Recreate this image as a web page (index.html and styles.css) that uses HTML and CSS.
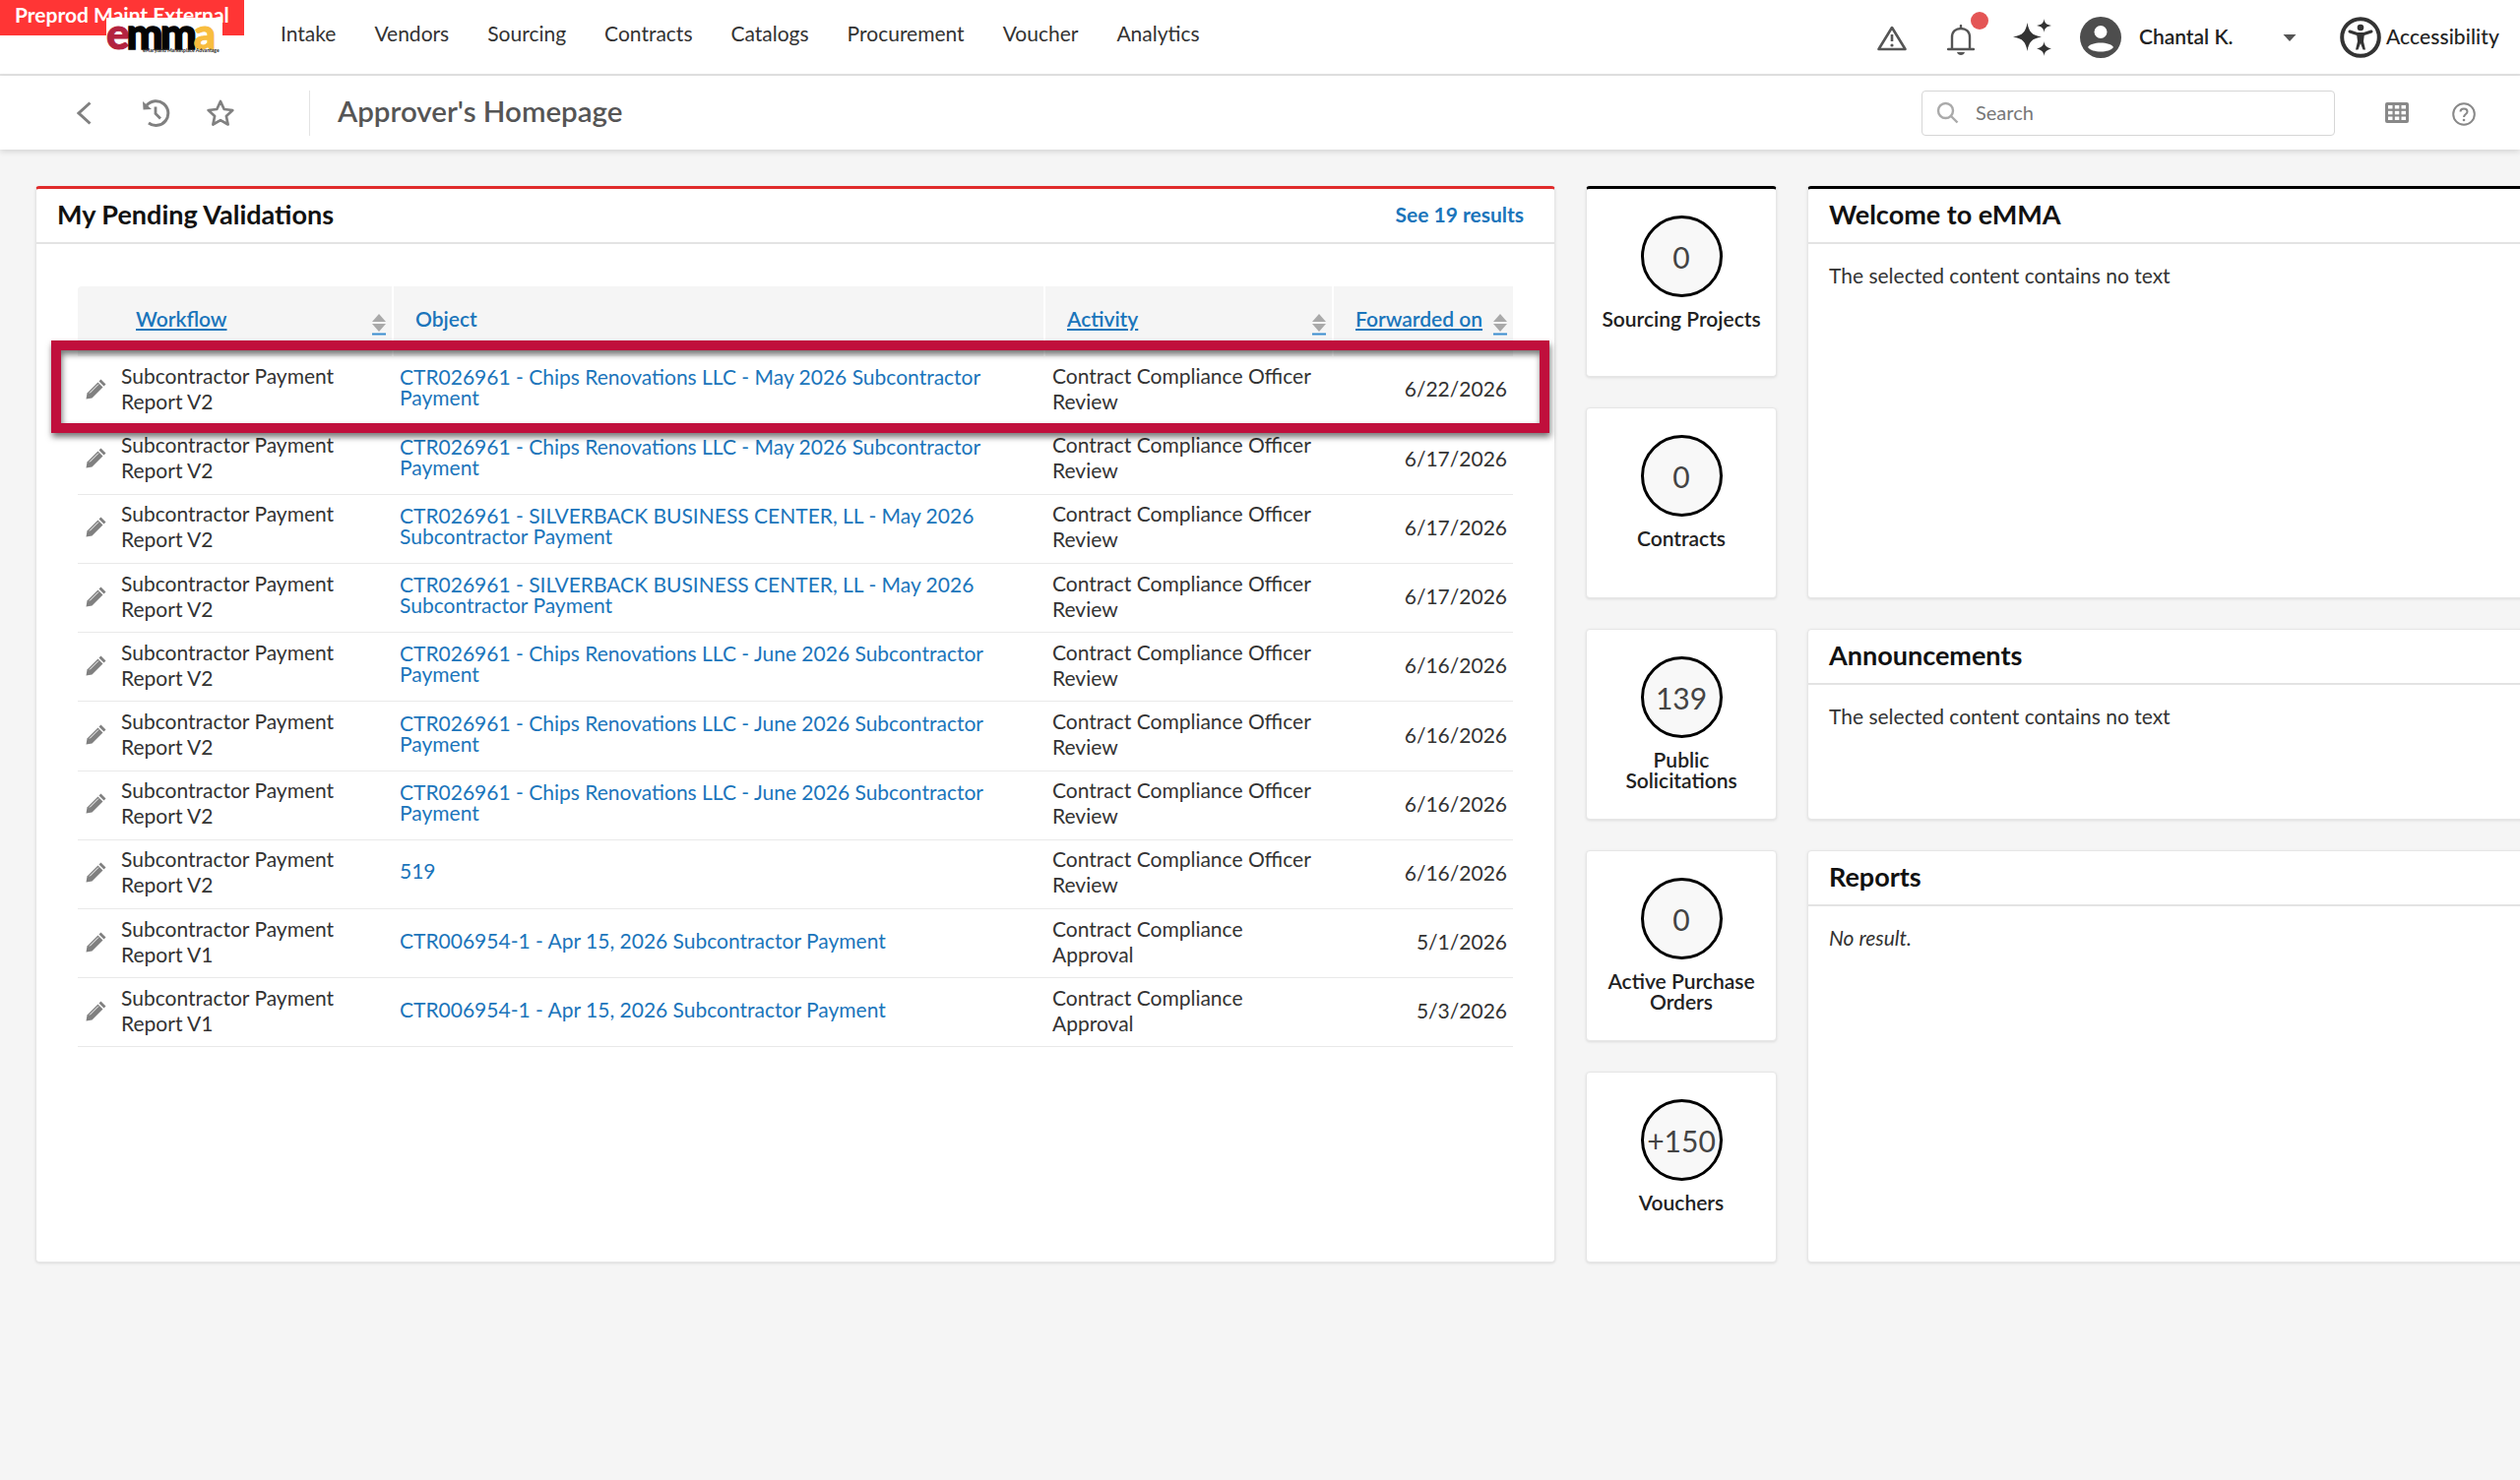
FILE: index.html
```html
<!DOCTYPE html>
<html>
<head>
	<title>Approver's Homepage</title>
	<meta charset="utf-8">
	<link rel="stylesheet" href="styles.css">
</head>
<body>
	<div class="env-banner">Preprod Maint External</div>
	<header class="topbar">
		<div class="logo">
			<div class="logo-word"><span class="logo-e">e</span><span class="logo-m">mm</span><span class="logo-a">a</span></div>
			<div class="logo-tag">eMaryland Marketplace Advantage</div>
		</div>
		<nav class="mainnav">
			<a>Intake</a>
			<a>Vendors</a>
			<a>Sourcing</a>
			<a>Contracts</a>
			<a>Catalogs</a>
			<a>Procurement</a>
			<a>Voucher</a>
			<a>Analytics</a>
		</nav>
		<div class="toptools">
			<svg class="ic-warn" width="30" height="26" viewBox="0 0 30 26"><path d="M15 2 L28.5 24 H1.5 Z" fill="none" stroke="#555" stroke-width="2.6" stroke-linejoin="round"/><path d="M15 9 V16" stroke="#555" stroke-width="2.6"/><circle cx="15" cy="20" r="1.6" fill="#555"/></svg>
			<div class="bell">
				<svg width="28" height="32" viewBox="0 0 28 32"><path d="M14 1 V4 M5 24 V13 C5 7 9 4 14 4 C19 4 23 7 23 13 V24 M1 25 H27" fill="none" stroke="#555" stroke-width="2.4" stroke-linecap="round"/><path d="M10 28 H18 C17 32 11 32 10 28 Z" fill="#555"/></svg>
				<span class="bell-dot"></span>
			</div>
			<svg class="ic-spark" width="39" height="38" viewBox="0 0 39 38"><path d="M14.5 4 C16 13 19 17 29 18.500 C19 20 16 24 14.500 33 C13 24 10 20 0 18.500 C10 17 13 13 14.500 4 Z" fill="#333"/><path d="M31.500 0 C32 4 33.500 6 39 7 C33.500 8 32 10 31.500 14 C31 10 29.500 8 24 7 C29.500 6 31 4 31.500 0 Z" fill="#333"/><path d="M31.500 23 C32 27 33.500 29 39 30.500 C33.500 32 32 34 31.500 38 C31 34 29.500 32 24 30.500 C29.500 29 31 27 31.500 23 Z" fill="#333"/></svg>
			<svg class="ic-avatar" width="42" height="42" viewBox="0 0 42 42"><circle cx="21" cy="21" r="21" fill="#4d4d4d"/><circle cx="21" cy="15.500" r="6.500" fill="#fff"/><path d="M8 31 C11 25 31 25 34 31 C30 37 12 37 8 31 Z" fill="#fff"/></svg>
			<span class="username">Chantal K.</span>
			<svg class="ic-caret" width="14" height="7" viewBox="0 0 14 7"><path d="M0.500 0 H13.500 L7 7 Z" fill="#555"/></svg>
			<svg class="ic-access" width="42" height="42" viewBox="0 0 42 42"><circle cx="21" cy="21" r="18.800" fill="none" stroke="#333" stroke-width="4"/><circle cx="21" cy="11" r="3.300" fill="#333"/><path d="M10 15 L17.500 17.500 H24.500 L32 15" fill="none" stroke="#333" stroke-width="3" stroke-linecap="round"/><path d="M17 17 H25 L24 25 L26 33.500 H23.500 L21 27 L18.500 33.500 H16 L18 25 Z" fill="#333"/></svg>
			<span class="access-label">Accessibility</span>
		</div>
	</header>
	<div class="subbar">
		<svg class="ic-back" width="15" height="24" viewBox="0 0 15 24"><path d="M13.500 1.500 L2 12 L13.500 22.500" fill="none" stroke="#808080" stroke-width="3"/></svg>
		<svg class="ic-hist" width="28" height="28" viewBox="0 0 28 28"><path d="M4 6 A12.400 12.400 0 1 1 6 24" fill="none" stroke="#808080" stroke-width="3"/><path d="M0 2 L0.500 10.500 L9 10 Z" fill="#808080"/><path d="M13 7.500 V14.500 L18 19.500" fill="none" stroke="#808080" stroke-width="2.800"/></svg>
		<svg class="ic-star" width="28" height="27" viewBox="0 0 28 27"><path d="M14 2 L17.700 10 L26.300 11 L19.900 16.900 L21.600 25.500 L14 21.200 L6.400 25.500 L8.100 16.900 L1.700 11 L10.300 10 Z" fill="none" stroke="#808080" stroke-width="2.700" stroke-linejoin="round"/></svg>
		<h1 class="page-title">Approver's Homepage</h1>
		<div class="searchbox">
			<svg width="23" height="23" viewBox="0 0 23 23"><circle cx="9.500" cy="9.500" r="7.500" fill="none" stroke="#aaa" stroke-width="2.400"/><path d="M15 15 L21.500 21.500" stroke="#aaa" stroke-width="2.400"/></svg>
			<span>Search</span>
		</div>
		<svg class="ic-grid" width="24" height="21" viewBox="0 0 24 21"><rect width="24" height="21" rx="2" fill="#888"/><g fill="#fff"><rect x="3" y="3" width="4.500" height="3.500"/><rect x="9.800" y="3" width="4.500" height="3.500"/><rect x="16.500" y="3" width="4.500" height="3.500"/><rect x="3" y="8.800" width="4.500" height="3.500"/><rect x="9.800" y="8.800" width="4.500" height="3.500"/><rect x="16.500" y="8.800" width="4.500" height="3.500"/><rect x="3" y="14.500" width="4.500" height="3.500"/><rect x="9.800" y="14.500" width="4.500" height="3.500"/><rect x="16.500" y="14.500" width="4.500" height="3.500"/></g></svg>
		<svg class="ic-help" width="24" height="24" viewBox="0 0 24 24"><circle cx="12" cy="12" r="10.800" fill="none" stroke="#888" stroke-width="2"/><path d="M8.500 9.500 C8.500 5.500 15.500 5.500 15.500 9.500 C15.500 12 12 12 12 15" fill="none" stroke="#888" stroke-width="2"/><circle cx="12" cy="18" r="1.300" fill="#888"/></svg>
	</div>

	<main class="dash">
		<section class="card pending">
			<div class="card-head">
				<h2>My Pending Validations</h2>
				<a class="see-all">See 19 results</a>
			</div>
			<table class="valid-table">
				<thead>
					<tr>
						<th class="col-wf"><div class="th-in"><a>Workflow</a><svg class="sort" width="14" height="22" viewBox="0 0 14 22"><path d="M7 0 L14 8 H0 Z M0 10 H14 L7 18 Z" fill="#a9a9a9"/><rect y="19.500" width="14" height="2" fill="#3c8dd0"/></svg></div></th>
						<th class="col-obj"><span class="plain-th">Object</span></th>
						<th class="col-act"><div class="th-in"><a>Activity</a><svg class="sort" width="14" height="22" viewBox="0 0 14 22"><path d="M7 0 L14 8 H0 Z M0 10 H14 L7 18 Z" fill="#a9a9a9"/><rect y="19.500" width="14" height="2" fill="#3c8dd0"/></svg></div></th>
						<th class="col-date"><div class="th-in"><a>Forwarded on</a><svg class="sort" width="14" height="22" viewBox="0 0 14 22"><path d="M7 0 L14 8 H0 Z M0 10 H14 L7 18 Z" fill="#a9a9a9"/><rect y="19.500" width="14" height="2" fill="#3c8dd0"/></svg></div></th>
					</tr>
				</thead>
				<tbody>
					<tr>
						<td><div class="wf"><svg class="pencil" viewBox="0 0 22 22"><use href="#pencil"/></svg><span>Subcontractor Payment Report V2</span></div></td>
						<td class="obj"><a>CTR026961 - Chips Renovations LLC - May 2026 Subcontractor Payment</a></td>
						<td class="act">Contract Compliance Officer Review</td>
						<td class="date">6/22/2026</td>
					</tr>
					<tr>
						<td><div class="wf"><svg class="pencil" viewBox="0 0 22 22"><use href="#pencil"/></svg><span>Subcontractor Payment Report V2</span></div></td>
						<td class="obj"><a>CTR026961 - Chips Renovations LLC - May 2026 Subcontractor Payment</a></td>
						<td class="act">Contract Compliance Officer Review</td>
						<td class="date">6/17/2026</td>
					</tr>
					<tr>
						<td><div class="wf"><svg class="pencil" viewBox="0 0 22 22"><use href="#pencil"/></svg><span>Subcontractor Payment Report V2</span></div></td>
						<td class="obj"><a>CTR026961 - SILVERBACK BUSINESS CENTER, LL - May 2026 Subcontractor Payment</a></td>
						<td class="act">Contract Compliance Officer Review</td>
						<td class="date">6/17/2026</td>
					</tr>
					<tr>
						<td><div class="wf"><svg class="pencil" viewBox="0 0 22 22"><use href="#pencil"/></svg><span>Subcontractor Payment Report V2</span></div></td>
						<td class="obj"><a>CTR026961 - SILVERBACK BUSINESS CENTER, LL - May 2026 Subcontractor Payment</a></td>
						<td class="act">Contract Compliance Officer Review</td>
						<td class="date">6/17/2026</td>
					</tr>
					<tr>
						<td><div class="wf"><svg class="pencil" viewBox="0 0 22 22"><use href="#pencil"/></svg><span>Subcontractor Payment Report V2</span></div></td>
						<td class="obj"><a>CTR026961 - Chips Renovations LLC - June 2026 Subcontractor Payment</a></td>
						<td class="act">Contract Compliance Officer Review</td>
						<td class="date">6/16/2026</td>
					</tr>
					<tr>
						<td><div class="wf"><svg class="pencil" viewBox="0 0 22 22"><use href="#pencil"/></svg><span>Subcontractor Payment Report V2</span></div></td>
						<td class="obj"><a>CTR026961 - Chips Renovations LLC - June 2026 Subcontractor Payment</a></td>
						<td class="act">Contract Compliance Officer Review</td>
						<td class="date">6/16/2026</td>
					</tr>
					<tr>
						<td><div class="wf"><svg class="pencil" viewBox="0 0 22 22"><use href="#pencil"/></svg><span>Subcontractor Payment Report V2</span></div></td>
						<td class="obj"><a>CTR026961 - Chips Renovations LLC - June 2026 Subcontractor Payment</a></td>
						<td class="act">Contract Compliance Officer Review</td>
						<td class="date">6/16/2026</td>
					</tr>
					<tr>
						<td><div class="wf"><svg class="pencil" viewBox="0 0 22 22"><use href="#pencil"/></svg><span>Subcontractor Payment Report V2</span></div></td>
						<td class="obj"><a>519</a></td>
						<td class="act">Contract Compliance Officer Review</td>
						<td class="date">6/16/2026</td>
					</tr>
					<tr>
						<td><div class="wf"><svg class="pencil" viewBox="0 0 22 22"><use href="#pencil"/></svg><span>Subcontractor Payment Report V1</span></div></td>
						<td class="obj"><a>CTR006954-1 - Apr 15, 2026 Subcontractor Payment</a></td>
						<td class="act">Contract Compliance Approval</td>
						<td class="date">5/1/2026</td>
					</tr>
					<tr>
						<td><div class="wf"><svg class="pencil" viewBox="0 0 22 22"><use href="#pencil"/></svg><span>Subcontractor Payment Report V1</span></div></td>
						<td class="obj"><a>CTR006954-1 - Apr 15, 2026 Subcontractor Payment</a></td>
						<td class="act">Contract Compliance Approval</td>
						<td class="date">5/3/2026</td>
					</tr>
				</tbody>
			</table>
			<div class="highlight"></div>
		</section>

		<section class="tile tile-top"><div class="count">0</div><div class="tile-name">Sourcing Projects</div></section>
		<section class="card welcome">
			<div class="card-head"><h2>Welcome to eMMA</h2></div>
			<p class="card-body">The selected content contains no text</p>
		</section>
		<section class="tile"><div class="count">0</div><div class="tile-name">Contracts</div></section>
		<section class="tile"><div class="count">139</div><div class="tile-name">Public Solicitations</div></section>
		<section class="card announce">
			<div class="card-head"><h2>Announcements</h2></div>
			<p class="card-body">The selected content contains no text</p>
		</section>
		<section class="tile"><div class="count">0</div><div class="tile-name">Active Purchase Orders</div></section>
		<section class="card reports">
			<div class="card-head"><h2>Reports</h2></div>
			<p class="card-body noresult">No result.</p>
		</section>
		<section class="tile"><div class="count">+150</div><div class="tile-name">Vouchers</div></section>
	</main>

	<svg class="defs" width="0" height="0">
		<defs>
			<g id="pencil">
				<path d="M15.500 1.500 L20.500 6.500 L18.500 8.500 L13.500 3.500 Z" fill="#808080"/>
				<path d="M12.500 4.500 L17.500 9.500 L6.500 20.500 L0.500 21.500 L1.500 15.500 Z" fill="#808080"/>
				<path d="M4 15.500 L13 6.500" stroke="#fff" stroke-width="1"/>
			</g>
		</defs>
	</svg>
</body>
</html>
```

FILE: styles.css
```css
*{
	padding: 0;
	margin: 0;
	box-sizing: border-box;
}
body{
	font-family: "Lato", "Open Sans", sans-serif;
	font-size: 21px;
	color: #333;
	background-color: #f5f5f5;
	width: 2560px;
	height: 1504px;
	overflow: hidden;
	position: relative;
}
a{
	cursor: pointer;
}
svg{
	display: block;
	flex: none;
}

/* top bar */
.env-banner{
	position: absolute;
	top: 0;
	left: 0;
	z-index: 3;
	width: 248px;
	height: 36px;
	padding: 2px 0 0 15px;
	background-color: #ff3535;
	color: #fff;
	font-size: 21px;
	font-weight: 700;
	white-space: nowrap;
}
.topbar{
	height: 77px;
	background-color: #fff;
	border-bottom: 2px solid #e3e3e3;
	display: flex;
	align-items: center;
	padding-left: 108px;
}
.logo{
	position: relative;
	z-index: 4;
	width: 118px;
	height: 36px;
	margin-top: -4px;
	background-color: #fff;
}
.logo-word{
	height: 30px;
	font-size: 44px;
	font-weight: 900;
	line-height: 30px;
	letter-spacing: -3px;
	white-space: nowrap;
}
.logo-e{
	color: #b3233f;
	-webkit-text-stroke: 1px #b3233f;
}
.logo-m{
	color: #050505;
	-webkit-text-stroke: 1.5px #050505;
}
.logo-a{
	color: #f8bd3f;
	-webkit-text-stroke: 1px #f8bd3f;
}
.logo-tag{
	margin-left: 37px;
	font-size: 5px;
	font-weight: 700;
	line-height: 6px;
	color: #222;
	white-space: nowrap;
}
.mainnav{
	display: flex;
	gap: 39px;
	margin-left: 59px;
	margin-top: -9px;
	color: #333;
}
.toptools{
	display: flex;
	align-items: center;
	margin-left: auto;
	padding-right: 21px;
}
.bell{
	position: relative;
	margin-left: 41px;
	margin-top: 6px;
}
.bell-dot{
	position: absolute;
	top: -13px;
	left: 24px;
	width: 18px;
	height: 18px;
	border-radius: 50%;
	background-color: #e45555;
}
.ic-warn{ margin-top: 3px; }
.ic-spark{ margin-left: 39px; }
.ic-avatar{ margin-left: 29px; }
.username{
	margin-left: 18px;
	width: 146px;
	margin-top: -3px;
	font-weight: 600;
	color: #222;
}
.ic-caret{ margin-top: 1px; }
.ic-access{ margin-left: 44px; }
.access-label{
	margin-left: 5px;
	margin-top: -3px;
	font-weight: 500;
	letter-spacing: .1px;
	color: #222;
}

/* second bar */
.subbar{
	position: relative;
	height: 75px;
	background-color: #fff;
	box-shadow: 0 2px 6px rgba(0,0,0,.14);
	display: flex;
	align-items: center;
	padding-left: 78px;
}
.ic-hist{ margin-left: 52px; }
.ic-star{ margin-left: 37px; }
.page-title{
	margin-left: 76px;
	padding-left: 28px;
	height: 46px;
	line-height: 41px;
	border-left: 1px solid #e3e3e3;
	font-size: 29.5px;
	font-weight: 600;
	color: #555;
}
.searchbox{
	margin-left: auto;
	width: 420px;
	height: 46px;
	border: 1px solid #d6d6d6;
	border-radius: 4px;
	display: flex;
	align-items: center;
	gap: 17px;
	padding-left: 14px;
	font-size: 20px;
	color: #777;
}
.searchbox span{
	margin-top: -2px;
}
.ic-grid{ margin-left: 51px; }
.ic-help{ margin-left: 44px; margin-right: 45px; margin-top: 2px; }

/* dashboard grid */
.dash{
	display: grid;
	grid-template-columns: 1544px 194px 760px;
	grid-template-rows: repeat(5, 194px);
	column-gap: 31px;
	row-gap: 31px;
	padding: 37px 0 0 36px;
}
.card, .tile{
	background-color: #fff;
	border: 1px solid #e6e6e6;
	border-radius: 4px;
	box-shadow: 0 1px 3px rgba(0,0,0,.1);
}
.pending{
	grid-column: 1;
	grid-row: 1 / 6;
	position: relative;
	border-top: 3px solid #e02b2b;
}
.welcome{
	grid-column: 3;
	grid-row: 1 / 3;
	border-top: 3px solid #000;
}
.announce{
	grid-column: 3;
	grid-row: 3;
}
.reports{
	grid-column: 3;
	grid-row: 4 / 6;
}
.card-head{
	height: 56px;
	border-bottom: 2px solid #e3e3e3;
	display: flex;
	align-items: center;
	justify-content: space-between;
	padding: 0 31px 4px 21px;
}
.card-head h2{
	font-size: 27px;
	font-weight: 700;
	color: #111;
}
.see-all{
	font-weight: 700;
	color: #1b75bb;
}
.card-body{
	padding: 19px 21px;
	line-height: 26px;
}
.noresult{
	font-style: italic;
}

/* tiles */
.tile{
	display: flex;
	flex-direction: column;
	align-items: center;
	padding: 27px 10px 0;
}
.tile-top{
	border-top: 3px solid #000;
}
.count{
	width: 83px;
	height: 83px;
	flex: none;
	border: 3px solid #000;
	border-radius: 50%;
	background-color: #f8f8f8;
	display: flex;
	align-items: center;
	justify-content: center;
	font-size: 30px;
	color: #444;
}
.tile-name{
	margin-top: 11px;
	font-weight: 600;
	line-height: 21px;
	text-align: center;
	color: #222;
}

/* table */
.valid-table{
	width: 1458px;
	margin: 43px 0 0 42px;
	border-collapse: collapse;
	table-layout: fixed;
}
.valid-table th{
	height: 71px;
	background-color: #f5f5f5;
	border-left: 2px solid #fff;
	text-align: left;
	font-weight: 600;
	padding: 0 6px 6px 22px;
}
.valid-table th:first-child{
	border-left: none;
	border-radius: 4px 0 0 0;
	padding-left: 59px;
}
.col-wf{ width: 320px; }
.col-obj{ width: 662px; }
.col-act{ width: 293px; }
.col-date{ width: 183px; }
.th-in{
	display: flex;
	align-items: center;
	justify-content: space-between;
}
.th-in a{
	color: #1b75bb;
	text-decoration: underline;
}
.plain-th{
	color: #1b75bb;
}
.sort{
	margin-top: 13px;
}
.valid-table td{
	height: 70.2px;
	border-bottom: 1px solid #e9e9e9;
	line-height: 26px;
	padding: 0 8px 4px 8px;
}
.valid-table td:first-child{
	padding: 0 30px 4px 8px;
}
.wf{
	display: flex;
	align-items: center;
	gap: 14px;
}
.pencil{
	width: 22px;
	height: 22px;
}
.valid-table td.obj{
	padding: 0 48px 7px 7px;
	line-height: 21px;
	color: #1b75bb;
}
.valid-table td.act{
	padding-right: 14px;
}
.valid-table td.date{
	text-align: right;
	padding: 0 6px 3px 0;
}
.highlight{
	position: absolute;
	top: 154px;
	left: 15px;
	width: 1522px;
	height: 94px;
	border: 10px solid #c00f3c;
	filter: drop-shadow(1px 4px 3px rgba(0,0,0,.55));
}
.defs{
	position: absolute;
}
```
